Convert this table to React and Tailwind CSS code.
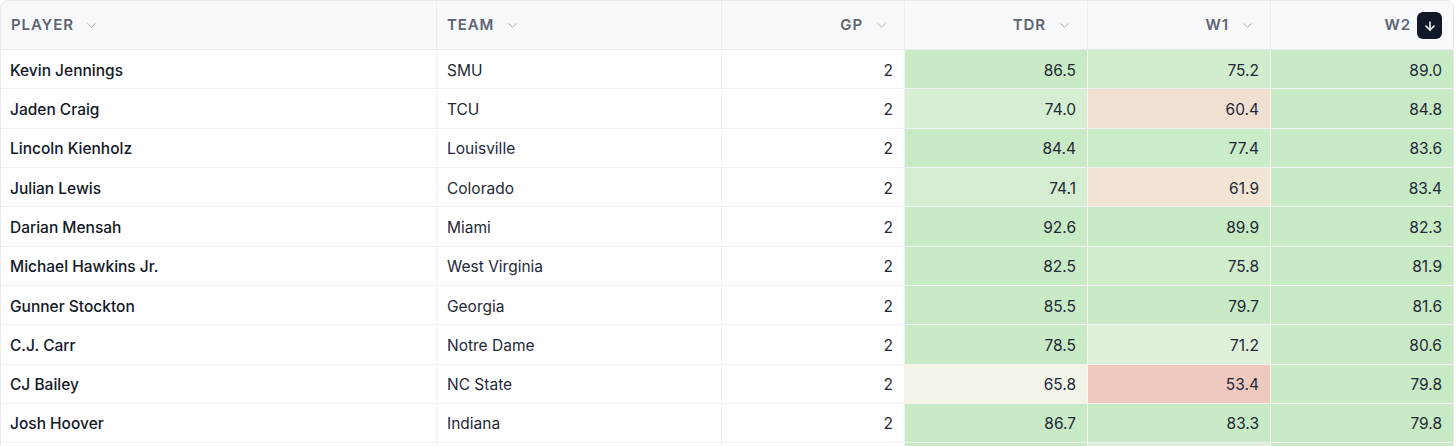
import React from 'react';
import { ChevronDown, ArrowDown } from 'lucide-react';

const rows = [
  ['Kevin Jennings', 'SMU', 2, 86.5, 75.2, 89.0],
  ['Jaden Craig', 'TCU', 2, 74.0, 60.4, 84.8],
  ['Lincoln Kienholz', 'Louisville', 2, 84.4, 77.4, 83.6],
  ['Julian Lewis', 'Colorado', 2, 74.1, 61.9, 83.4],
  ['Darian Mensah', 'Miami', 2, 92.6, 89.9, 82.3],
  ['Michael Hawkins Jr.', 'West Virginia', 2, 82.5, 75.8, 81.9],
  ['Gunner Stockton', 'Georgia', 2, 85.5, 79.7, 81.6],
  ['C.J. Carr', 'Notre Dame', 2, 78.5, 71.2, 80.6],
  ['CJ Bailey', 'NC State', 2, 65.8, 53.4, 79.8],
  ['Josh Hoover', 'Indiana', 2, 86.7, 83.3, 79.8],
];

// colour stops for the heat scale
const stops = [
  [53, [239, 200, 189]],
  [62, [242, 229, 214]],
  [66, [241, 245, 232]],
  [78, [200, 235, 198]],
];

const heat = (v) => {
  if (v <= stops[0][0]) return `rgb(${stops[0][1].join(',')})`;
  for (let i = 1; i < stops.length; i++) {
    const [v1, c1] = stops[i];
    const [v0, c0] = stops[i - 1];
    if (v <= v1) {
      const t = (v - v0) / (v1 - v0);
      const c = c0.map((x, k) => Math.round(x + (c1[k] - x) * t));
      return `rgb(${c.join(',')})`;
    }
  }
  return `rgb(${stops[stops.length - 1][1].join(',')})`;
};

const cols = 'grid grid-cols-[436px_285px_183px_183px_183px_1fr]';

const HeadCell = ({ label, right, active, last }) => (
  <div
    className={`flex items-center gap-1.5 h-full pl-[10px] pr-[11px] pt-[1px] ${right ? 'justify-end' : ''} ${last ? '' : 'border-r border-[#eceef1]'}`}
  >
    <span className="text-[15px] font-semibold tracking-[0.06em] text-[#5d6472]">{label}</span>
    {active ? (
      <span className="flex items-center justify-center w-[25px] h-[27px] rounded-md bg-[#111827]">
        <ArrowDown size={14} strokeWidth={2.6} className="text-white" />
      </span>
    ) : (
      <span className="flex items-center justify-center w-[24px] h-[26px]">
        <ChevronDown size={15} strokeWidth={1.4} className="text-[#a3a8b2]" />
      </span>
    )}
  </div>
);

export default function App() {
  return (
    <div className="bg-white h-[446px] overflow-hidden" style={{ fontFamily: 'Inter, "Noto Sans", sans-serif' }}>
      <div className="w-[1454px] border border-[#e7e9ed] rounded-lg overflow-hidden">
        <div className={`${cols} h-[49px] bg-[#f8f9fb] border-b border-[#e7e9ed]`}>
          <HeadCell label="PLAYER" />
          <HeadCell label="TEAM" />
          <HeadCell label="GP" right />
          <HeadCell label="TDR" right />
          <HeadCell label="W1" right />
          <HeadCell label="W2" right active last />
        </div>
        {rows.map(([name, team, gp, tdr, w1, w2]) => (
          <div key={name} className={`${cols} h-[39.33px] border-b border-[#eff1f3] text-[15.5px]`}>
            <div className="flex items-center pl-[9px] pt-[2px] border-r border-[#eff1f3] font-medium text-[#111827]">{name}</div>
            <div className="flex items-center pl-[10px] pt-[2px] border-r border-[#eff1f3] text-[#1f2937]">{team}</div>
            <div className="flex items-center justify-end pr-[11px] pt-[2px] border-r border-[#eff1f3] text-[#1f2937]">{gp}</div>
            {[tdr, w1, w2].map((v, i) => (
              <div
                key={i}
                className={`flex items-center justify-end pr-[11px] pt-[2px] text-[#1f2937] ${i < 2 ? 'border-r border-[#f6f8f6]' : ''}`}
                style={{ backgroundColor: heat(v) }}
              >
                {v.toFixed(1)}
              </div>
            ))}
          </div>
        ))}
        {/* next row, scrolled out of view */}
        <div className={`${cols} h-[39.33px]`}>
          <div className="border-r border-[#eff1f3]" />
          <div className="border-r border-[#eff1f3]" />
          <div className="border-r border-[#eff1f3]" />
          <div className="border-r border-[#f6f8f6]" style={{ backgroundColor: heat(80.1) }} />
          <div className="border-r border-[#f6f8f6]" style={{ backgroundColor: heat(72.4) }} />
          <div style={{ backgroundColor: heat(79.1) }} />
        </div>
      </div>
    </div>
  );
}
